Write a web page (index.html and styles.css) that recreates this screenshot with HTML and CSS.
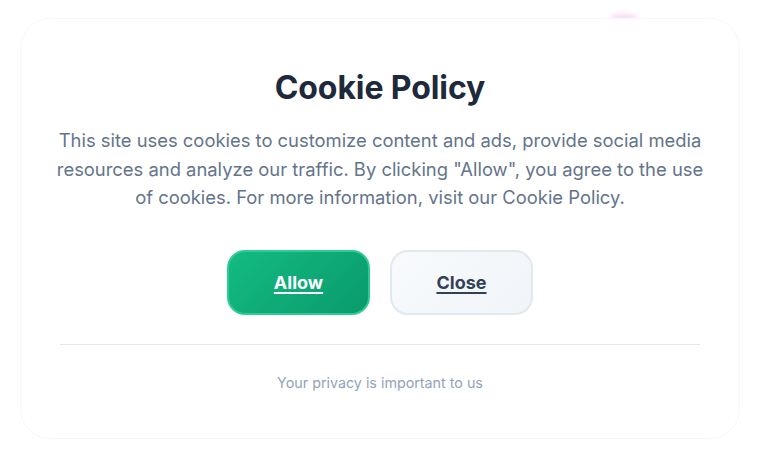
FILE: index.html
```html
<!DOCTYPE html>
<html lang="en">
<head>
<meta charset="utf-8">
<title>Cookie Policy</title>
<link rel="stylesheet" href="styles.css">
</head>
<body>
<div class="stage">
  <div class="glow"></div>
  <section class="card">
    <h1 class="title">Cookie Policy</h1>
    <p class="text">This site uses cookies to customize content and ads, provide social media resources and analyze our traffic. By clicking "Allow", you agree to the use of cookies. For more information, visit our Cookie Policy.</p>
    <div class="actions">
      <a class="btn btn-allow" href="#">Allow</a>
      <a class="btn btn-close" href="#">Close</a>
    </div>
    <hr class="divider">
    <p class="footer">Your privacy is important to us</p>
  </section>
</div>
</body>
</html>
```
FILE: styles.css
```css
* { box-sizing: border-box; }
html, body { margin: 0; padding: 0; background: #ffffff; }
body {
  font-family: Inter, "Noto Sans", sans-serif;
  width: 768px;
  height: 462px;
  overflow: hidden;
}
.stage {
  position: relative;
  padding: 18px 28px 0 20px;
}
.glow {
  position: absolute;
  left: 610px;
  top: 14px;
  width: 28px;
  height: 6px;
  border-radius: 50%;
  background: #f5c9ea;
  filter: blur(2px);
  opacity: 0.7;
}
.card {
  position: relative;
  width: 720px;
  height: 421px;
  background: #ffffff;
  border: 1px solid #f6f7f9;
  border-radius: 30px;
  padding: 49px 32px 0;
  text-align: center;
}
.title {
  margin: 0;
  font-size: 32px;
  line-height: 40px;
  font-weight: 700;
  color: #1e293b;
  letter-spacing: -0.1px;
}
.text {
  margin: 18px 0 0;
  font-size: 18.4px;
  line-height: 28.6px;
  color: #64748b;
}
.actions {
  display: flex;
  justify-content: center;
  gap: 20px;
  margin-top: 38px;
}
.btn {
  display: flex;
  align-items: center;
  justify-content: center;
  width: 143px;
  height: 65px;
  border-radius: 18px;
  font-size: 18px;
  font-weight: 700;
  text-decoration: underline;
  text-underline-offset: 3px;
  text-decoration-thickness: 2px;
}
.btn-allow {
  background: linear-gradient(135deg, #13bb82 0%, #0a9a6c 100%);
  border: 2px solid #2fcc92;
  color: #ffffff;
}
.btn-close {
  background: linear-gradient(135deg, #f8fafc 0%, #f1f5f9 100%);
  border: 2px solid #e2e8f0;
  color: #334155;
}
.divider {
  margin: 29px 7px 0;
  border: 0;
  height: 1px;
  background: #e5e7eb;
}
.footer {
  margin: 27px 0 0;
  font-size: 14.3px;
  line-height: 22px;
  color: #94a3b8;
}
```
